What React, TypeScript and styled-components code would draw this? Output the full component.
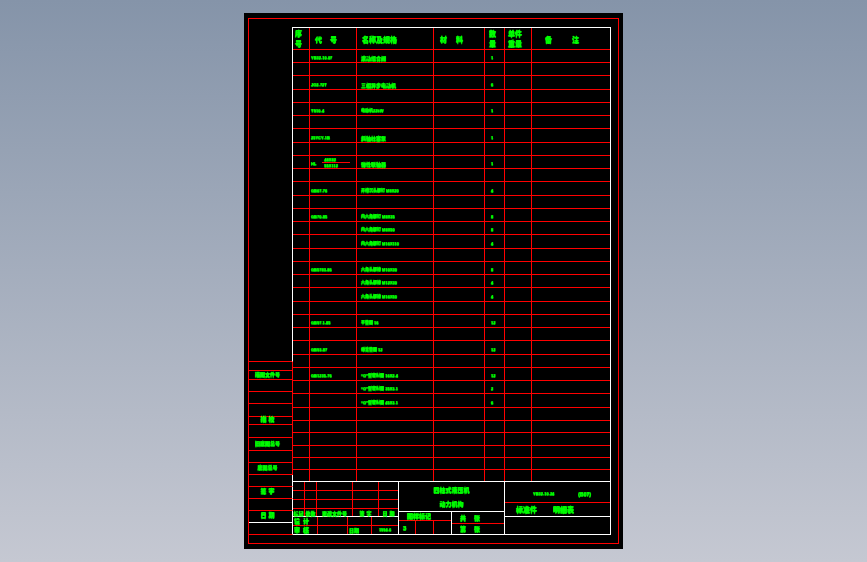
import React from "react";
import styled, { createGlobalStyle } from "styled-components";

const RED = "#ff0000";
const WHITE = "#ffffff";
const GREEN = "#00ff00";

const GlobalStyle = createGlobalStyle`
  * { box-sizing: border-box; }
  body {
    margin: 0;
    font-family: "Liberation Sans", "Noto Sans CJK SC", sans-serif;
    font-weight: 700;
    color: ${GREEN};
  }
`;

const Page = styled.main`
  min-height: 100vh;
  padding: 13px 244px;
  background: linear-gradient(#8594a9, #c5c8d2);
`;

const Sheet = styled.section`
  min-width: 379px;
  padding: 5px 4px;
  background: #000;
`;

const Frame = styled.div`
  display: flex;
  padding: 8px 7px 8px 0;
  border: 1px solid ${RED};
`;

const Margin = styled.aside`
  display: flex;
  flex-direction: column;
  flex: none;
  width: 44px;
`;

const MarginBlank = styled.div`
  flex: 1;
  border-right: 1px solid ${WHITE};
  border-bottom: 1px solid ${RED};
`;

const MarginCell = styled.div<{ $h: number; $side?: string; $bottom?: string }>`
  display: flex;
  align-items: center;
  justify-content: center;
  height: ${(p) => p.$h}px;
  padding-right: 6px;
  padding-bottom: 3px;
  border-right: 1px solid ${(p) => p.$side ?? RED};
  border-bottom: 1px solid ${(p) => p.$bottom ?? RED};
`;

const Label = styled.span<{ $size?: number; $gap?: number }>`
  display: inline-flex;
  gap: ${(p) => p.$gap ?? 0}px;
  font-size: ${(p) => p.$size ?? 6}px;
  line-height: 8px;
  white-space: nowrap;
  text-shadow: 0 1px 0 ${GREEN}, 0 0 0 ${GREEN};
`;

const Drawing = styled.div`
  flex: 1;
  min-width: 0;
  border-top: 1px solid ${WHITE};
  border-right: 1px solid ${WHITE};
`;

const PartsTable = styled.table`
  width: 100%;
  table-layout: fixed;
  border-collapse: separate;
  border-spacing: 0;
`;

const Col = styled.col<{ $w?: number }>`
  width: ${(p) => (p.$w ? `${p.$w}px` : "auto")};
`;

const HeadCell = styled.th<{ $left?: number }>`
  height: 22px;
  padding: 2px 0 0 ${(p) => p.$left ?? 0}px;
  border-right: 1px solid ${RED};
  border-bottom: 1px solid ${RED};
  text-align: left;
  line-height: 0;
  &:last-child { border-right: 0; }
`;

const Stack = styled.span`
  display: flex;
  flex-direction: column;
  gap: 2px;
  padding-bottom: 1px;
`;

const BodyRow = styled.tr<{ $h: number }>`
  height: ${(p) => p.$h}px;
  &:last-child td { border-bottom: 0; }
`;

const Cell = styled.td<{ $left?: number }>`
  padding: 4px 0 0 ${(p) => p.$left ?? 0}px;
  border-right: 1px solid ${RED};
  border-bottom: 1px solid ${RED};
  vertical-align: middle;
  line-height: 0;
  &:last-child { border-right: 0; }
`;

const CodeWithFraction = styled.span`
  display: flex;
  align-items: center;
  gap: 6px;
  height: 8px;
`;

const Fraction = styled.span`
  display: flex;
  flex-direction: column;
  width: 28px;
  margin-top: -3px;
`;

const Numerator = styled.span`
  display: flex;
  height: 6px;
  align-items: center;
  padding-left: 2px;
  border-bottom: 1px solid ${RED};
`;

const Denominator = styled.span`
  display: flex;
  height: 5px;
  align-items: center;
  padding-left: 2px;
`;

const TitleBlock = styled.footer`
  display: grid;
  grid-template-columns: 106fr 106fr 105fr;
  height: 54px;
  border-top: 1px solid ${WHITE};
  border-bottom: 1px solid ${WHITE};
`;

const Section = styled.div`
  display: flex;
  flex-direction: column;
  min-width: 0;
  border-right: 1px solid ${WHITE};
  &:last-child { border-right: 0; }
`;

const Grid = styled.div<{ $cols: string; $rows: string; $bottom?: boolean }>`
  display: grid;
  grid-template-columns: ${(p) => p.$cols};
  grid-template-rows: ${(p) => p.$rows};
  border-bottom: ${(p) => (p.$bottom ? `1px solid ${WHITE}` : "0")};
`;

const Box = styled.div<{ $r?: string; $b?: string; $left?: number }>`
  display: flex;
  align-items: center;
  justify-content: ${(p) => (p.$left === undefined ? "center" : "flex-start")};
  min-width: 0;
  min-height: 0;
  padding-left: ${(p) => p.$left ?? 0}px;
  border-right: ${(p) => (p.$r ? `1px solid ${p.$r}` : "0")};
  border-bottom: ${(p) => (p.$b ? `1px solid ${p.$b}` : "0")};
`;

const SpanBox = styled(Box)`
  grid-column: 1 / -1;
`;

const TitleBox = styled.div`
  display: flex;
  flex-direction: column;
  align-items: center;
  justify-content: center;
  gap: 6px;
  height: 30px;
  border-bottom: 1px solid ${WHITE};
`;

const NumberBox = styled(Box)`
  height: 21px;
  padding-top: 4px;
  gap: 24px;
`;

const NameBox = styled(Box)`
  height: 14px;
  gap: 16px;
`;

type Part = {
  h: number;
  code?: string;
  fraction?: [string, string];
  name?: string;
  size?: number;
  qty?: string;
};

const parts: Part[] = [
  { h: 13, code: "YB32-10.07", name: "滚动组合阀", size: 5, qty: "1" },
  { h: 13 },
  { h: 14, code: "JO2-72T", name: "三相异步电动机", size: 5, qty: "6" },
  { h: 13 },
  { h: 13, code: "TS10-4", name: "电动机22kW", qty: "1" },
  { h: 13 },
  { h: 14, code: "25YCY-1B", name: "斜轴柱塞泵", size: 5, qty: "1" },
  { h: 13 },
  { h: 13, code: "HL", fraction: ["48X82", "55X112"], name: "弹性联轴器", size: 5, qty: "1" },
  { h: 13 },
  { h: 14, code: "GB67-76", name: "开槽沉头螺钉 M8X20", qty: "4" },
  { h: 13 },
  { h: 13, code: "GB70-85", name: "内六角螺钉 M8X35", qty: "8" },
  { h: 13, name: "内六角螺钉 M8X50", qty: "8" },
  { h: 14, name: "内六角螺钉 M16X110", qty: "4" },
  { h: 13 },
  { h: 13, code: "GB5783-86", name: "六角头螺栓 M10X30", qty: "8" },
  { h: 13, name: "六角头螺栓 M12X30", qty: "4" },
  { h: 14, name: "六角头螺栓 M16X50", qty: "4" },
  { h: 13 },
  { h: 13, code: "GB97.1-85", name: "平垫圈  16", qty: "12" },
  { h: 13 },
  { h: 14, code: "GB93-87", name: "弹簧垫圈  12", qty: "12" },
  { h: 13 },
  { h: 13, code: "GB1235-76", name: "“O”型密封圈  16X2.4", qty: "12" },
  { h: 13, name: "“O”型密封圈  35X3.1", qty: "2" },
  { h: 14, name: "“O”型密封圈  45X3.1", qty: "6" },
  { h: 13 },
  { h: 12 },
  { h: 13 },
  { h: 12 },
  { h: 12 },
  { h: 11 },
];

function Spaced({ text, gap, size }: { text: string; gap: number; size?: number }) {
  return (
    <Label $gap={gap} $size={size}>
      {text.split("").map((c, i) => (
        <span key={i}>{c}</span>
      ))}
    </Label>
  );
}

function MarginColumn() {
  return (
    <Margin>
      <MarginBlank />
      <MarginCell $h={9} />
      <MarginCell $h={9}><Label $size={5}>描图文件号</Label></MarginCell>
      <MarginCell $h={12} />
      <MarginCell $h={12} />
      <MarginCell $h={13} />
      <MarginCell $h={8}><Spaced text="描校" gap={2} /></MarginCell>
      <MarginCell $h={13} />
      <MarginCell $h={13}><Label $size={5}>旧底图总号</Label></MarginCell>
      <MarginCell $h={12} />
      <MarginCell $h={12}><Label $size={5}>底图总号</Label></MarginCell>
      <MarginCell $h={12} $side={WHITE} />
      <MarginCell $h={12} $side={WHITE}><Spaced text="签字" gap={2} /></MarginCell>
      <MarginCell $h={12} $side={WHITE} />
      <MarginCell $h={12} $side={WHITE} $bottom={WHITE}><Spaced text="日期" gap={2} /></MarginCell>
      <MarginCell $h={12} $side={WHITE} />
    </Margin>
  );
}

function PartsList() {
  return (
    <PartsTable>
      <colgroup>
        <Col $w={17} />
        <Col $w={47} />
        <Col $w={77} />
        <Col $w={51} />
        <Col $w={20} />
        <Col $w={27} />
        <Col />
      </colgroup>
      <thead>
        <tr>
          <HeadCell $left={2}><Stack><Label $size={7}>序</Label><Label $size={7}>号</Label></Stack></HeadCell>
          <HeadCell $left={5}><Spaced text="代号" gap={8} size={7} /></HeadCell>
          <HeadCell $left={5}><Label $size={7}>名称及规格</Label></HeadCell>
          <HeadCell $left={6}><Spaced text="材料" gap={9} size={7} /></HeadCell>
          <HeadCell $left={4}><Stack><Label $size={7}>数</Label><Label $size={7}>量</Label></Stack></HeadCell>
          <HeadCell $left={3}><Stack><Label $size={7}>单件</Label><Label $size={7}>重量</Label></Stack></HeadCell>
          <HeadCell $left={13}><Spaced text="备注" gap={20} size={7} /></HeadCell>
        </tr>
      </thead>
      <tbody>
        {parts.map((p, i) => (
          <BodyRow key={i} $h={p.h}>
            <Cell />
            <Cell $left={1}>
              {p.fraction ? (
                <CodeWithFraction>
                  <Label $size={4}>{p.code}</Label>
                  <Fraction>
                    <Numerator><Label $size={4}>{p.fraction[0]}</Label></Numerator>
                    <Denominator><Label $size={4}>{p.fraction[1]}</Label></Denominator>
                  </Fraction>
                </CodeWithFraction>
              ) : (
                p.code && <Label $size={4}>{p.code}</Label>
              )}
            </Cell>
            <Cell $left={4}>{p.name && <Label $size={p.size ?? 4}>{p.name}</Label>}</Cell>
            <Cell />
            <Cell $left={6}>{p.qty && <Label $size={4}>{p.qty}</Label>}</Cell>
            <Cell />
            <Cell />
          </BodyRow>
        ))}
      </tbody>
    </PartsTable>
  );
}

function Revisions() {
  const labels = [
    <Label $size={5}>标记</Label>,
    <Label $size={5}>处数</Label>,
    <Label $size={5}>更改文件号</Label>,
    <Spaced text="签字" gap={2} size={5} />,
    <Spaced text="日期" gap={2} size={5} />,
  ];
  return (
    <Section>
      <Grid $cols="12px 12px 36px 26px 1fr" $rows="9px 9px 9px 7px" $bottom>
        {[0, 1, 2, 3].map((r) =>
          labels.map((l, c) => (
            <Box key={`${r}-${c}`} $r={c < 4 ? RED : undefined} $b={r < 3 ? RED : undefined}>
              {r === 3 && l}
            </Box>
          ))
        )}
      </Grid>
      <Grid $cols="25px 30px 24px 1fr" $rows="9px 8px">
        <Box $r={RED} $b={RED} $left={1}><Spaced text="设计" gap={3} /></Box>
        <Box $r={RED} $b={RED} />
        <Box $r={RED} $b={RED} />
        <Box $b={RED} />
        <Box $r={RED} $left={1}><Spaced text="审核" gap={3} /></Box>
        <Box $r={RED} />
        <Box $r={RED} $left={1}><Label $size={5}>日期</Label></Box>
        <Box><Label $size={4}>1994.6</Label></Box>
      </Grid>
    </Section>
  );
}

export default function App() {
  return (
    <>
      <GlobalStyle />
      <Page>
        <Sheet>
          <Frame>
            <MarginColumn />
            <Drawing>
              <PartsList />
              <TitleBlock>
                <Revisions />
                <Section>
                  <TitleBox>
                    <Label $size={6}>四柱式液压机</Label>
                    <Label $size={6}>动力机构</Label>
                  </TitleBox>
                  <Grid $cols="1fr 52px" $rows="22px">
                    <Box $r={WHITE}>
                      <Grid $cols="17px 18px 17px" $rows="9px 13px">
                        <SpanBox $b={RED} $left={8}><Label>图样标记</Label></SpanBox>
                        <Box $r={RED} $left={4}><Label $size={6}>3</Label></Box>
                        <Box $r={RED} />
                        <Box />
                      </Grid>
                    </Box>
                    <Grid $cols="1fr" $rows="12px 10px">
                      <Box $b={RED} $left={8}><Spaced text="共张" gap={8} /></Box>
                      <Box $left={8}><Spaced text="第张" gap={8} /></Box>
                    </Grid>
                  </Grid>
                </Section>
                <Section>
                  <NumberBox $b={RED} $left={28}>
                    <Label $size={4}>YB32-10.24</Label>
                    <Label $size={5}>(B07)</Label>
                  </NumberBox>
                  <NameBox $b={WHITE} $left={11}>
                    <Label $size={7}>标准件</Label>
                    <Label $size={7}>明细表</Label>
                  </NameBox>
                </Section>
              </TitleBlock>
            </Drawing>
          </Frame>
        </Sheet>
      </Page>
    </>
  );
}
